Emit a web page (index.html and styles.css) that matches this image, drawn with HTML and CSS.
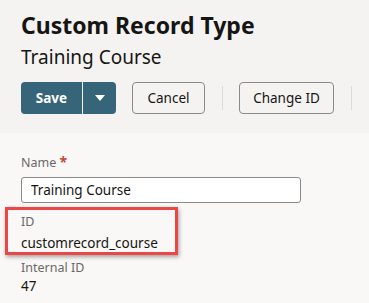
FILE: index.html
```html
<!DOCTYPE html>
<html lang="en">
<head>
    <meta charset="UTF-8">
    <title>Custom Record Type</title>
    <link rel="stylesheet" href="styles.css">
</head>
<body>
    <header class="page-header">
        <h1>Custom Record Type</h1>
        <h2>Training Course</h2>
        <div class="toolbar">
            <div class="split-btn">
                <button class="btn-primary">Save</button>
                <button class="btn-primary btn-caret" aria-label="More">
                    <svg width="10" height="6" viewBox="0 0 10 6"><path d="M0 0h10L5 6z" fill="#fff"/></svg>
                </button>
            </div>
            <button class="btn btn-cancel">Cancel</button>
            <span class="sep"></span>
            <button class="btn btn-change">Change ID</button>
            <span class="sep"></span>
        </div>
    </header>
    <main class="form">
        <div class="field">
            <label class="label">Name <span class="req">*</span></label>
            <input class="text-input" type="text" value="Training Course">
        </div>
        <div class="field highlight">
            <div class="label">ID</div>
            <div class="value">customrecord_course</div>
        </div>
        <div class="field last">
            <div class="label">Internal ID</div>
            <div class="value">47</div>
        </div>
    </main>
</body>
</html>
```

FILE: styles.css
```css
body {
    margin: 0;
    font-family: "Noto Sans", sans-serif;
    color: #161513;
    background-color: #f9f8f6;
}
.page-header {
    background-color: #f4f3f1;
    padding: 10px 21px 18px;
    height: 105px;
}
h1 {
    margin: 0;
    font-size: 23px;
    font-weight: 700;
    line-height: 30px;
}
h2 {
    margin: 4px 0 0;
    font-size: 19px;
    font-weight: 400;
    line-height: 26px;
}
.toolbar {
    margin-top: 12px;
    display: flex;
    align-items: center;
}
.toolbar > * {
    flex-shrink: 0;
}
.split-btn {
    display: flex;
    border-radius: 4px;
    overflow: hidden;
}
button {
    font-family: inherit;
    font-size: 13.5px;
    height: 32px;
    white-space: nowrap;
    cursor: pointer;
}
.btn-primary {
    background-color: #366579;
    color: #fff;
    font-weight: 700;
    border: none;
    padding: 0;
    width: 61px;
}
.btn-caret {
    width: 34px;
    border-left: 1px solid #f4f3f1;
    display: flex;
    align-items: center;
    justify-content: center;
}
.btn {
    background-color: transparent;
    border: 1px solid #8b8a88;
    border-radius: 4px;
    color: #161513;
    padding: 0;
    margin-left: 16px;
    height: 32px;
}
.btn-cancel {
    width: 73px;
}
.btn-change {
    width: 95px;
}
.sep {
    width: 1px;
    height: 24px;
    background-color: #dcdbd9;
    margin-left: 17px;
}
.form {
    padding: 21px 21px 0;
}
.label {
    display: block;
    font-size: 12.5px;
    color: #6a6968;
    line-height: 16px;
}
.req {
    color: #c74634;
    font-size: 14px;
    font-weight: 700;
}
.text-input {
    display: block;
    box-sizing: border-box;
    width: 280px;
    height: 26px;
    margin-top: 6px;
    border: 1px solid #8b8a88;
    border-radius: 3px;
    background: #fff;
    font-family: inherit;
    font-size: 13.5px;
    padding: 0 9px;
    color: #161513;
}
.field.highlight {
    position: relative;
}
.field.highlight::after {
    content: "";
    position: absolute;
    left: -16px;
    top: 4px;
    width: 167px;
    height: 42px;
    border: 3px solid #ec4747;
    box-shadow: 1px 2px 4px rgba(0, 0, 0, 0.35);
}
.highlight .label {
    padding-top: 11px;
}
.value {
    font-size: 13.5px;
    line-height: 20px;
    margin-top: 3px;
}
.field.last .label {
    margin-top: 7px;
}
.field.last .value {
    margin-top: 0;
}
```
